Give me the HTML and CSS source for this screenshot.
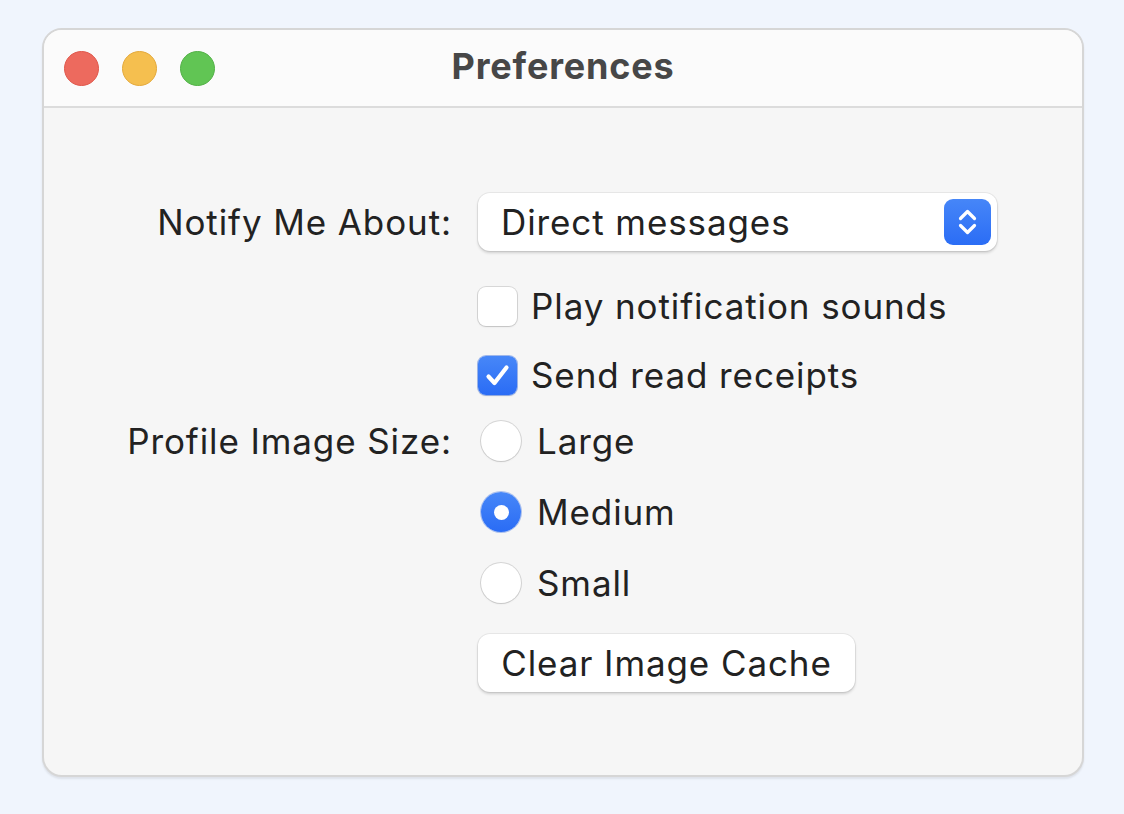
FILE: index.html
```html
<!DOCTYPE html>
<html lang="en">
<head>
<meta charset="utf-8">
<title>Preferences</title>
<link rel="stylesheet" href="styles.css">
</head>
<body>
<div class="window">
  <div class="titlebar">
    <div class="lights">
      <span class="light red"></span>
      <span class="light yellow"></span>
      <span class="light green"></span>
    </div>
    <div class="title">Preferences</div>
    <div class="spacer"></div>
  </div>
  <div class="content">
    <div class="row row-popup">
      <div class="label">Notify Me About:</div>
      <div class="popup">
        <span class="popup-text">Direct messages</span>
        <span class="stepper">
          <svg width="47" height="46" viewBox="0 0 47 46"><path d="M16.5 19.5 L23.5 12.5 L30.5 19.5 M16.5 26.5 L23.5 33.5 L30.5 26.5" fill="none" stroke="#fff" stroke-width="3.2" stroke-linecap="round" stroke-linejoin="round"/></svg>
        </span>
      </div>
    </div>
    <div class="row row-check1">
      <div class="label"></div>
      <div class="option"><span class="checkbox"></span><span class="opt-text">Play notification sounds</span></div>
    </div>
    <div class="row row-check2">
      <div class="label"></div>
      <div class="option"><span class="checkbox checked"><svg width="39" height="39" viewBox="0 0 39 39"><path d="M10.5 20.5 L16.5 27 L28.5 11.5" fill="none" stroke="#fff" stroke-width="4.2" stroke-linecap="round" stroke-linejoin="round"/></svg></span><span class="opt-text">Send read receipts</span></div>
    </div>
    <div class="row row-radio1">
      <div class="label">Profile Image Size:</div>
      <div class="option"><span class="radio"></span><span class="opt-text radio-text">Large</span></div>
    </div>
    <div class="row row-radio">
      <div class="label"></div>
      <div class="option"><span class="radio selected"><span class="dot"></span></span><span class="opt-text radio-text">Medium</span></div>
    </div>
    <div class="row row-radio">
      <div class="label"></div>
      <div class="option"><span class="radio"></span><span class="opt-text radio-text">Small</span></div>
    </div>
    <div class="row row-button">
      <div class="label"></div>
      <div class="button-cell"><button class="button">Clear Image Cache</button></div>
    </div>
  </div>
</div>
</body>
</html>
```
FILE: styles.css
```css
* { box-sizing: border-box; }
html, body { margin: 0; padding: 0; }
body {
  background: #f0f5fd;
  font-family: Inter, "Noto Sans", "Liberation Sans", sans-serif;
  color: #222;
  width: 1124px;
  height: 814px;
  overflow: hidden;
  padding-top: 28px;
  padding-left: 42px;
}
.window {
  width: 1042px;
  height: 749px;
  border: 2px solid #d6d6d6;
  border-radius: 20px;
  background: #f6f6f6;
  overflow: hidden;
  box-shadow: 0 2px 2px rgba(0,0,0,0.08);
}
.titlebar {
  height: 78px;
  background: #fbfbfb;
  border-bottom: 2px solid #dcdcdc;
  display: grid;
  grid-template-columns: 1fr auto 1fr;
  align-items: center;
}
.lights {
  display: flex;
  gap: 23px;
  padding-left: 20px;
}
.light {
  width: 35px;
  height: 35px;
  border-radius: 50%;
  display: block;
}
.red { background: #ed6a5e; border: 1px solid #e0574b; }
.yellow { background: #f5bf4f; border: 1px solid #e4a93b; }
.green { background: #61c554; border: 1px solid #52b146; }
.title {
  font-weight: 700;
  font-size: 36px;
  letter-spacing: 0.8px;
  color: #474747;
  padding-bottom: 5px;
}
.content {
  padding-top: 85px;
}
.row {
  display: grid;
  grid-template-columns: 408px 1fr;
  column-gap: 26px;
  align-items: center;
}
.label,
.popup-text,
.opt-text,
.button {
  font-size: 35px;
  letter-spacing: 0.9px;
  color: #222;
}
.label {
  text-align: right;
}
.row-popup { height: 58px; }
.row-check1 { height: 40px; margin-top: 34px; }
.row-check2 { height: 40px; margin-top: 29px; }
.row-radio1 { height: 40px; margin-top: 26px; }
.row-radio { height: 40px; margin-top: 31px; }
.row-button { height: 58px; margin-top: 32px; }
.popup {
  width: 519px;
  height: 58px;
  background: #fff;
  border-radius: 12px;
  box-shadow: 0 0 0 1px rgba(0,0,0,0.06), 0 2px 3px rgba(0,0,0,0.16);
  display: flex;
  align-items: center;
  justify-content: space-between;
  padding-left: 23px;
  padding-right: 6px;
}
.stepper {
  width: 47px;
  height: 46px;
  border-radius: 9px;
  background: linear-gradient(#4686f8, #2b6df5);
  display: flex;
}
.option {
  display: flex;
  align-items: center;
}
.opt-text { margin-left: 14px; }
.radio-text { margin-left: 16px; }
.checkbox {
  width: 39px;
  height: 39px;
  border-radius: 8px;
  background: #fff;
  box-shadow: 0 0 0 1px rgba(0,0,0,0.12), 0 1px 2px rgba(0,0,0,0.1);
  display: flex;
}
.checkbox.checked {
  background: linear-gradient(#4787f8, #2a6cf5);
  box-shadow: 0 0 0 1px rgba(30,90,220,0.4), 0 1px 2px rgba(0,0,0,0.12);
}
.radio {
  width: 40px;
  height: 40px;
  border-radius: 50%;
  background: #fff;
  box-shadow: 0 0 0 1px rgba(0,0,0,0.13), 0 1px 2px rgba(0,0,0,0.08);
  margin-left: 3px;
  display: flex;
  align-items: center;
  justify-content: center;
}
.radio.selected {
  background: linear-gradient(#4787f8, #2a6cf5);
  box-shadow: 0 0 0 1px rgba(30,90,220,0.35);
}
.dot {
  width: 15px;
  height: 15px;
  border-radius: 50%;
  background: #fff;
}
.button {
  width: 377px;
  height: 58px;
  border: none;
  border-radius: 12px;
  background: #fff;
  box-shadow: 0 0 0 1px rgba(0,0,0,0.06), 0 2px 3px rgba(0,0,0,0.16);
  font-family: inherit;
  padding: 0;
}
```
